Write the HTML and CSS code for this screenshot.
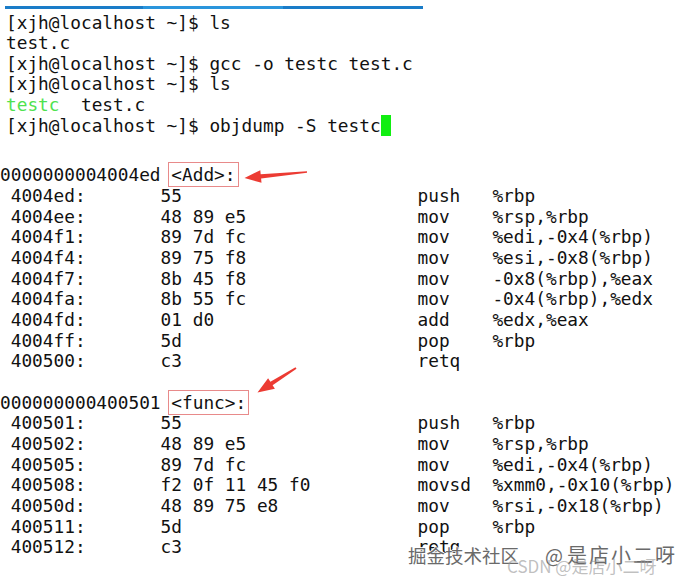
FILE: index.html
```html
<!DOCTYPE html>
<html>
<head>
<meta charset="utf-8">
<link rel="stylesheet" href="styles.css">
</head>
<body>
<div class="page">
  <div class="topbar"></div>
  <div class="term top">
    <div class="ln">[xjh@localhost ~]$ ls</div>
    <div class="ln">test.c</div>
    <div class="ln">[xjh@localhost ~]$ gcc -o testc test.c</div>
    <div class="ln">[xjh@localhost ~]$ ls</div>
    <div class="ln"><span class="exe">testc</span>  test.c</div>
    <div class="ln">[xjh@localhost ~]$ objdump -S testc<span class="cursor"> </span></div>
  </div>
  <div class="term dump">
    <div class="ln">0000000004004ed <span class="sym">&lt;Add&gt;:</span></div>
    <div class="ins"><span>4004ed:</span><span>55</span><span>push</span><span>%rbp</span></div>
    <div class="ins"><span>4004ee:</span><span>48 89 e5</span><span>mov</span><span>%rsp,%rbp</span></div>
    <div class="ins"><span>4004f1:</span><span>89 7d fc</span><span>mov</span><span>%edi,-0x4(%rbp)</span></div>
    <div class="ins"><span>4004f4:</span><span>89 75 f8</span><span>mov</span><span>%esi,-0x8(%rbp)</span></div>
    <div class="ins"><span>4004f7:</span><span>8b 45 f8</span><span>mov</span><span>-0x8(%rbp),%eax</span></div>
    <div class="ins"><span>4004fa:</span><span>8b 55 fc</span><span>mov</span><span>-0x4(%rbp),%edx</span></div>
    <div class="ins"><span>4004fd:</span><span>01 d0</span><span>add</span><span>%edx,%eax</span></div>
    <div class="ins"><span>4004ff:</span><span>5d</span><span>pop</span><span>%rbp</span></div>
    <div class="ins"><span>400500:</span><span>c3</span><span>retq</span><span></span></div>
    <div class="ln"> </div>
    <div class="ln">000000000400501 <span class="sym">&lt;func&gt;:</span></div>
    <div class="ins"><span>400501:</span><span>55</span><span>push</span><span>%rbp</span></div>
    <div class="ins"><span>400502:</span><span>48 89 e5</span><span>mov</span><span>%rsp,%rbp</span></div>
    <div class="ins"><span>400505:</span><span>89 7d fc</span><span>mov</span><span>%edi,-0x4(%rbp)</span></div>
    <div class="ins"><span>400508:</span><span>f2 0f 11 45 f0</span><span>movsd</span><span>%xmm0,-0x10(%rbp)</span></div>
    <div class="ins"><span>40050d:</span><span>48 89 75 e8</span><span>mov</span><span>%rsi,-0x18(%rbp)</span></div>
    <div class="ins"><span>400511:</span><span>5d</span><span>pop</span><span>%rbp</span></div>
    <div class="ins"><span>400512:</span><span>c3</span><span>retq</span><span></span></div>
  </div>

  <svg class="arrows" width="695" height="585" viewBox="0 0 695 585">
    <polygon fill="#ec3b33" points="307,171.3 260.7,174.3 260.3,170.2 244.5,178 261.5,182.8 261.1,178.6 307,172.7"/>
    <polygon fill="#ec3b33" points="295.5,367.3 270.4,381.8 268.1,378.2 257.5,392.5 274.9,388.8 272.6,385.2 296.5,368.7"/>
  </svg>

  <div class="wm wm1"><span class="a">掘金技术社区</span><span class="b">@</span><span class="c">是店小二呀</span></div>
  <div class="wm wm2">CSDN @是店小二呀</div>
</div>
</body>
</html>
```

FILE: styles.css
```css
html, body {
  margin: 0;
  padding: 0;
  background: #ffffff;
}

.page {
  position: relative;
  width: 695px;
  height: 585px;
  overflow: hidden;
}

.topbar {
  margin: 6px 0 0 5px;
  width: 418px;
  height: 3px;
  background: linear-gradient(to right, #1a7cc8 0, #1a7cc8 138px, #2a95dc 138px, #2a95dc 278px, #1a7cc8 278px);
}

.term {
  font-family: "DejaVu Sans Mono", monospace;
  font-size: 17.8px;
  line-height: 20.67px;
  color: #111111;
}

.term.top {
  margin-top: 3.5px;
  padding-left: 6px;
}

.term.dump {
  margin-top: 29px;
  padding-left: 0;
}

.ln {
  height: 20.67px;
  white-space: pre;
}

.exe {
  color: #4fe24f;
}

.cursor {
  background: #11ee11;
}

.sym {
  position: relative;
}

.sym::after {
  content: "";
  position: absolute;
  left: -3px;
  right: -3px;
  top: -2px;
  bottom: -2px;
  border: 1.5px solid #e88a8a;
}

.ins {
  display: grid;
  grid-template-columns: 14ch 24ch 7ch auto;
  padding-left: 1ch;
  height: 20.67px;
  white-space: pre;
}

.arrows {
  position: absolute;
  left: 0;
  top: 0;
  pointer-events: none;
}

.wm {
  position: absolute;
  font-family: "Noto Sans CJK SC", sans-serif;
  white-space: nowrap;
}

.wm1 {
  left: 408px;
  top: 540px;
  display: flex;
  align-items: baseline;
  color: #6a6a6a;
  text-shadow: 1px 0 0 rgba(255,255,255,0.9), -1px 0 0 rgba(255,255,255,0.9), 0 1px 0 rgba(255,255,255,0.9), 0 -1px 0 rgba(255,255,255,0.9);
}

.wm1 .a {
  font-size: 18.5px;
}

.wm1 .b {
  font-size: 19px;
  margin-left: 26px;
}

.wm1 .c {
  font-size: 20px;
  letter-spacing: 2px;
  margin-left: 4px;
}

.wm2 {
  left: 507px;
  top: 553px;
  font-size: 17px;
  color: rgba(150, 150, 150, 0.6);
}
```
